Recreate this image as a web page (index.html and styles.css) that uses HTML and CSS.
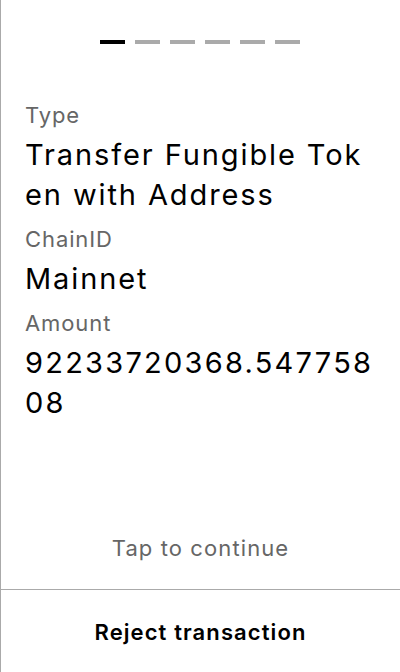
FILE: index.html
```html
<!DOCTYPE html>
<html>
<head>
<meta charset="utf-8">
<link rel="stylesheet" href="styles.css">
</head>
<body>
<div class="screen">
  <div class="progress">
    <span class="dash active"></span>
    <span class="dash"></span>
    <span class="dash"></span>
    <span class="dash"></span>
    <span class="dash"></span>
    <span class="dash"></span>
  </div>
  <div class="fields">
    <div class="label">Type</div>
    <div class="value">Transfer Fungible Token with Address</div>
    <div class="label">ChainID</div>
    <div class="value">Mainnet</div>
    <div class="label">Amount</div>
    <div class="value amount">92233720368.54775808</div>
  </div>
  <div class="tap">Tap to continue</div>
  <div class="footer">Reject transaction</div>
</div>
</body>
</html>
```

FILE: styles.css
```css
html, body {
  margin: 0;
  padding: 0;
  background: #fff;
}
body {
  font-family: Inter, "Noto Sans", sans-serif;
  color: #000;
}
.screen {
  height: 672px;
  box-sizing: border-box;
  border-left: 1px solid #aaa;
  display: flex;
  flex-direction: column;
}
.progress {
  display: flex;
  justify-content: center;
  gap: 10px;
  padding-top: 40px;
  padding-right: 1px;
}
.dash {
  width: 25px;
  height: 4px;
  background: #aaa;
}
.dash.active {
  background: #000;
}
.fields {
  padding: 51px 25px 0 24px;
  flex: 1;
}
.label {
  font-size: 22px;
  line-height: 40px;
  letter-spacing: 0.9px;
  color: #666;
  margin-top: 4px;
}
.label:first-child {
  margin-top: 0;
}
.value {
  font-size: 29px;
  line-height: 40px;
  letter-spacing: 1.9px;
  word-break: break-all;
}
.value.amount {
  letter-spacing: 2.25px;
}
.tap {
  text-align: center;
  font-size: 22px;
  line-height: 28px;
  letter-spacing: 1.1px;
  color: #666;
  padding-bottom: 27px;
}
.footer {
  border-top: 1px solid #aaa;
  height: 83px;
  box-sizing: border-box;
  padding-top: 2px;
  display: flex;
  align-items: center;
  justify-content: center;
  font-size: 22px;
  font-weight: 600;
  letter-spacing: 1.1px;
}
```
